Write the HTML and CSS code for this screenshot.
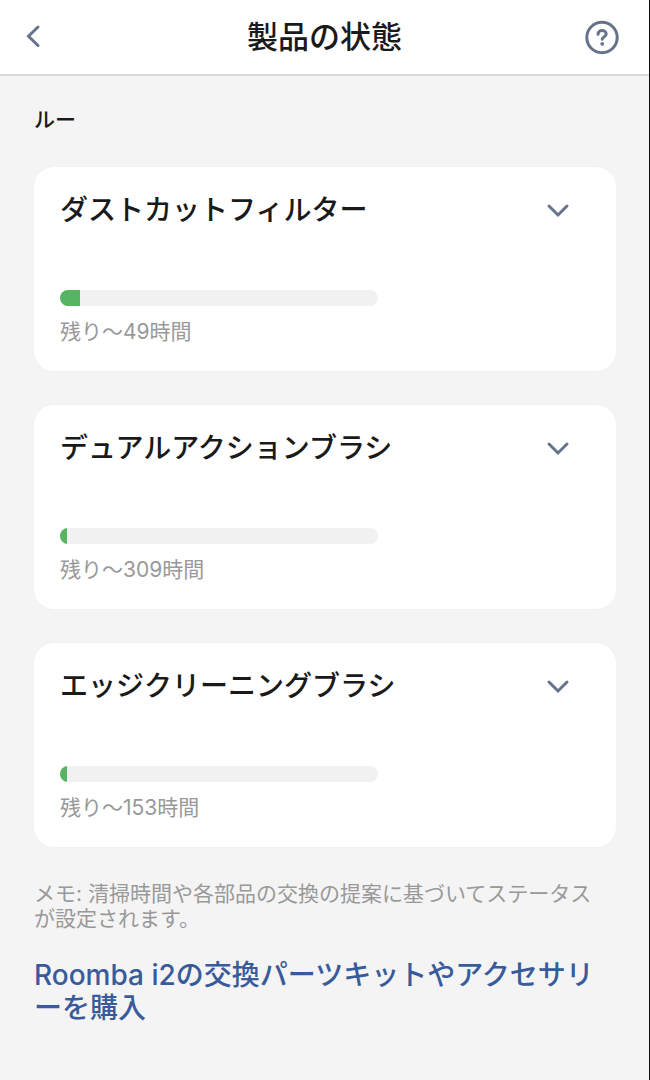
FILE: index.html
```
<!DOCTYPE html>
<html lang="ja">
<head>
    <meta charset="UTF-8">
    <meta name="viewport" content="width=device-width, initial-scale=1">
    <title>製品の状態</title>
    <link rel="stylesheet" href="styles.css">
</head>
<body>
    <header class="header">
        <button type="button" class="icon-button back" aria-label="戻る">
            <svg width="34" height="34" viewBox="0 0 34 34"><path d="M8 7-1.500 16.200 8 25.500"/></svg>
        </button>
        <h1>製品の状態</h1>
        <button type="button" class="icon-button" aria-label="ヘルプ">
            <svg width="34" height="34" viewBox="0 0 34 34">
                <circle cx="17" cy="17.500" r="15.200"/>
                <path d="M13 14.200c0-4.800 8.200-4.800 8.200-.2 0 2.900-4 3-4 5.200"/>
                <circle class="dot" cx="17.200" cy="23.800" r="1.900"/>
            </svg>
        </button>
    </header>

    <main class="content">
        <h2 class="robot-name">ルー</h2>

        <div class="card-list">
            <section class="card">
                <div class="card-header">
                    <h3 id="filter">ダストカットフィルター</h3>
                    <button type="button" class="toggle" aria-label="詳細を表示" aria-expanded="false">
                        <svg width="24" height="24" viewBox="0 0 24 24"><path d="m3 8 9 9 9-9"/></svg>
                    </button>
                </div>
                <progress value="6.3" max="100" aria-labelledby="filter"></progress>
                <p class="remaining">残り〜49時間</p>
            </section>

            <section class="card">
                <div class="card-header">
                    <h3 id="brush">デュアルアクションブラシ</h3>
                    <button type="button" class="toggle" aria-label="詳細を表示" aria-expanded="false">
                        <svg width="24" height="24" viewBox="0 0 24 24"><path d="m3 8 9 9 9-9"/></svg>
                    </button>
                </div>
                <progress value="2.2" max="100" aria-labelledby="brush"></progress>
                <p class="remaining">残り〜309時間</p>
            </section>

            <section class="card">
                <div class="card-header">
                    <h3 id="edge">エッジクリーニングブラシ</h3>
                    <button type="button" class="toggle" aria-label="詳細を表示" aria-expanded="false">
                        <svg width="24" height="24" viewBox="0 0 24 24"><path d="m3 8 9 9 9-9"/></svg>
                    </button>
                </div>
                <progress value="2.2" max="100" aria-labelledby="edge"></progress>
                <p class="remaining">残り〜153時間</p>
            </section>
        </div>

        <p class="note">メモ: 清掃時間や各部品の交換の提案に基づいてステータスが設定されます。</p>
        <a class="shop-link" href="#">Roomba i2の交換パーツキットやアクセサリーを購入</a>
    </main>
</body>
</html>
```
FILE: styles.css
```
* {
    margin: 0;
    padding: 0;
    box-sizing: border-box;
}

body {
    min-height: 100vh;
    font-family: Inter, 'Noto Sans CJK JP', sans-serif;
    background: #f4f4f4;
    color: #1a1a1a;
    border-right: 1px solid #111;
    line-break: loose;
}

button {
    display: flex;
    align-items: center;
    justify-content: center;
    background: none;
    border: none;
    cursor: pointer;
}

svg {
    fill: none;
    stroke: #65748a;
    stroke-width: 3;
    stroke-linecap: round;
    overflow: visible;
}

.header {
    display: flex;
    align-items: center;
    justify-content: space-between;
    height: 76px;
    padding: 0 30px;
    background: #fff;
    border-bottom: 2px solid #dadada;
}

.header h1 {
    font-size: 31px;
    font-weight: 500;
    line-height: 40px;
}

.icon-button {
    height: 44px;
}

.dot {
    fill: #65748a;
    stroke: none;
}

.content {
    padding: 28px 33px 40px 34px;
}

.robot-name {
    font-size: 21px;
    font-weight: 500;
    line-height: 32px;
}

.card-list {
    display: flex;
    flex-direction: column;
    gap: 34px;
    margin-top: 31px;
}

.card {
    padding: 26px;
    background: #fff;
    border-radius: 20px;
    box-shadow: 0 0 2px rgba(0, 0, 0, 0.04);
}

.card-header {
    display: flex;
    align-items: center;
    justify-content: space-between;
    height: 34px;
}

.card-header h3 {
    font-size: 28px;
    font-weight: 500;
    line-height: 34px;
}

.toggle {
    width: 44px;
    height: 44px;
    margin-right: 10px;
}

progress {
    display: block;
    appearance: none;
    width: 60%;
    height: 16px;
    margin-top: 63px;
    border: none;
    border-radius: 8px;
    overflow: hidden;
}

progress::-webkit-progress-bar {
    background: #f1f1f1;
}

progress::-webkit-progress-value {
    background: #55b562;
}

.remaining {
    margin-top: 13px;
    font-size: 21px;
    line-height: 26px;
    color: #999;
}

.note {
    margin-top: 34px;
    padding-right: 12px;
    font-size: 21px;
    line-height: 25px;
    color: #999;
}

.shop-link {
    display: block;
    margin-top: 28px;
    font-size: 28px;
    font-weight: 500;
    line-height: 33px;
    color: #395b9b;
    text-decoration: none;
}
```
